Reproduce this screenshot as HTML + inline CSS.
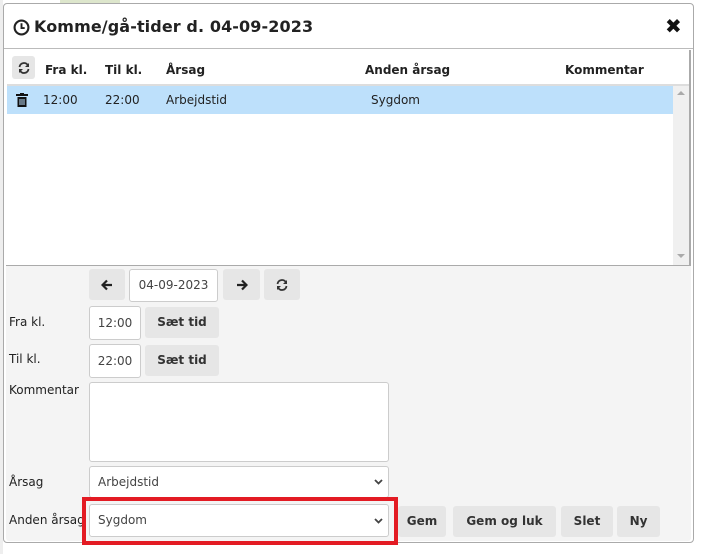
<!DOCTYPE html>
<html><head><meta charset="utf-8"><style>
*{box-sizing:border-box;margin:0;padding:0}
body{width:701px;height:554px;background:#fff;position:relative;overflow:hidden;font-family:"DejaVu Sans",Verdana,sans-serif;font-size:12px;color:#222}
.a{position:absolute}
.dlg{left:3px;top:3px;width:691px;height:540px;border:1px solid #aaa;border-radius:4px;background:#fff}
.btn{position:absolute;background:#e6e6e6;border-radius:3px;font-weight:bold;font-size:12px;text-align:center;color:#333}
.btn svg{position:absolute;left:50%;top:50%;transform:translate(-50%,-50%)}
.inp{position:absolute;background:#fff;border:1px solid #ccc;border-radius:3px;font-size:12px;color:#444}
.hd{font-weight:bold;font-size:12px;top:63px}
.lbl{font-size:12px;color:#222}
.chev{position:absolute;right:5px;top:50%;margin-top:-3px}
</style></head><body>
<div class="a" style="left:0;top:0;width:3px;height:554px;background:#eee"></div>
<div class="a" style="left:60px;top:0;width:60px;height:3px;background:#dde6cc"></div>
<div class="a dlg"></div>
<svg class="a" style="left:13px;top:19px" width="17" height="17" viewBox="0 0 16 16"><circle cx="8" cy="8" r="6.5" fill="none" stroke="#222" stroke-width="2"/><path d="M8 4v4.5h3" fill="none" stroke="#222" stroke-width="1.8"/></svg>
<div class="a" style="left:34px;top:17px;font-size:16px;font-weight:bold;color:#222;letter-spacing:0.1px">Komme/gå-tider d. 04-09-2023</div>
<div class="a" style="left:665px;top:14px;font-size:20px;font-weight:bold;color:#111">✖</div>
<div class="a" style="left:4px;top:48px;width:689px;height:1px;background:#bbb"></div>
<div class="a btn" style="left:12px;top:56px;width:23px;height:23px"><svg width="12" height="12" viewBox="0 0 12 12"><path d="M1.5 5A4.5 4.5 0 0 1 10 3.5M10.5 7A4.5 4.5 0 0 1 2 8.5" fill="none" stroke="#333" stroke-width="1.8"/><path d="M11 1v4H7z M1 11V7h4z" fill="#333"/></svg></div>
<div class="a hd" style="left:45px">Fra kl.</div>
<div class="a hd" style="left:105px">Til kl.</div>
<div class="a hd" style="left:166px">Årsag</div>
<div class="a hd" style="left:365px">Anden årsag</div>
<div class="a hd" style="left:565px">Kommentar</div>
<div class="a" style="left:7px;top:84px;width:682px;height:2px;background:#ddd"></div>
<div class="a" style="left:7px;top:86px;width:666px;height:28px;background:#bde0fb"></div>
<svg class="a" style="left:16px;top:93px" width="12" height="14" viewBox="0 0 12 14"><rect x="0" y="1" width="12" height="2" fill="#111"/><rect x="4" y="0" width="4" height="2" fill="#111"/><path d="M1.5 4h9v10h-9z" fill="#111"/><path d="M4 6v6M6 6v6M8 6v6" stroke="#bde0fb" stroke-width="1"/></svg>
<div class="a" style="left:43px;top:93px;font-size:12px">12:00</div>
<div class="a" style="left:105px;top:93px;font-size:12px">22:00</div>
<div class="a" style="left:166px;top:93px;font-size:12px">Arbejdstid</div>
<div class="a" style="left:371px;top:93px;font-size:12px">Sygdom</div>
<div class="a" style="left:673px;top:86px;width:16px;height:179px;background:#f0f0f0"></div>
<div class="a" style="left:677px;top:91px;width:0;height:0;border-left:4px solid transparent;border-right:4px solid transparent;border-bottom:4px solid #aaa"></div>
<div class="a" style="left:677px;top:254px;width:0;height:0;border-left:4px solid transparent;border-right:4px solid transparent;border-top:4px solid #aaa"></div>
<div class="a" style="left:689px;top:50px;width:2px;height:215px;background:#aaa"></div>
<div class="a" style="left:6px;top:265px;width:685px;height:276px;background:#f4f4f4;border-top:1px solid #aaa;border-radius:0 0 3px 3px"></div>
<div class="btn" style="left:89px;top:269px;width:36px;height:31px"><svg width="12" height="12" viewBox="0 0 12 12"><path d="M11 6H2M6 1.5L1.5 6 6 10.5" fill="none" stroke="#222" stroke-width="2.2"/></svg></div>
<div class="inp" style="left:129px;top:269px;width:89px;height:33px;line-height:31px;text-align:center">04-09-2023</div>
<div class="btn" style="left:223px;top:269px;width:37px;height:31px"><svg width="12" height="12" viewBox="0 0 12 12"><path d="M1 6h9M6 1.5L10.5 6 6 10.5" fill="none" stroke="#222" stroke-width="2.2"/></svg></div>
<div class="btn" style="left:264px;top:269px;width:36px;height:31px"><svg width="12" height="12" viewBox="0 0 12 12"><path d="M1.5 5A4.5 4.5 0 0 1 10 3.5M10.5 7A4.5 4.5 0 0 1 2 8.5" fill="none" stroke="#333" stroke-width="1.8"/><path d="M11 1v4H7z M1 11V7h4z" fill="#333"/></svg></div>
<div class="a lbl" style="left:9px;top:315px">Fra kl.</div>
<div class="inp" style="left:89px;top:306px;width:52px;height:34px;line-height:32px;text-align:center">12:00</div>
<div class="btn" style="left:145px;top:307px;width:74px;height:31px;line-height:31px">Sæt tid</div>
<div class="a lbl" style="left:9px;top:352px">Til kl.</div>
<div class="inp" style="left:89px;top:344px;width:52px;height:34px;line-height:32px;text-align:center">22:00</div>
<div class="btn" style="left:145px;top:345px;width:74px;height:31px;line-height:31px">Sæt tid</div>
<div class="a lbl" style="left:9px;top:383px">Kommentar</div>
<div class="inp" style="left:89px;top:382px;width:300px;height:80px"></div>
<div class="a lbl" style="left:9px;top:475px">Årsag</div>
<div class="inp" style="left:89px;top:466px;width:300px;height:32px;line-height:30px;padding-left:8px">Arbejdstid<svg class="chev" width="9" height="6" viewBox="0 0 9 6"><path d="M1 1l3.5 3.5L8 1" fill="none" stroke="#444" stroke-width="1.8"/></svg></div>
<div class="a lbl" style="left:9px;top:513px">Anden årsag</div>
<div class="a" style="left:82px;top:497px;width:316px;height:48px;border:4px solid #e31b23"></div>
<div class="inp" style="left:89px;top:504px;width:300px;height:33px;line-height:31px;padding-left:8px">Sygdom<svg class="chev" width="9" height="6" viewBox="0 0 9 6"><path d="M1 1l3.5 3.5L8 1" fill="none" stroke="#444" stroke-width="1.8"/></svg></div>
<div class="btn" style="left:398px;top:506px;width:48px;height:31px;line-height:31px">Gem</div>
<div class="btn" style="left:453px;top:506px;width:103px;height:31px;line-height:31px">Gem og luk</div>
<div class="btn" style="left:561px;top:506px;width:52px;height:31px;line-height:31px">Slet</div>
<div class="btn" style="left:617px;top:506px;width:43px;height:31px;line-height:31px">Ny</div>
</body></html>
